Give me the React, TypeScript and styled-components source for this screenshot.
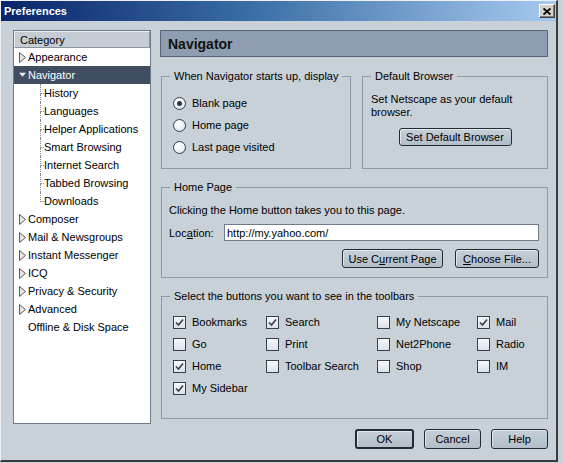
import React from "react";
import styled, { createGlobalStyle, css } from "styled-components";

const FONT = `"Liberation Sans", Arial, sans-serif`;

const GlobalStyle = createGlobalStyle`
  html, body { margin: 0; padding: 0; background: #c8d0d8; }
  body { font-family: ${FONT}; font-size: 11px; color: #000; }
  * { box-sizing: border-box; }
`;

const Window = styled.div`
  width: 558px;
  height: 462px;
  display: flex;
  flex-direction: column;
  background: #c8d0d8;
  border-left: 1px solid #eef0f2;
  border-top: 1px solid #eef0f2;
  border-right: 2px solid #3c3c3c;
  border-bottom: 2px solid #3c3c3c;
`;

const TitleBar = styled.div`
  height: 20px;
  display: flex;
  align-items: center;
  padding: 0 1px 0 3px;
  background: linear-gradient(to right, #0a246a 0%, #3a6ea5 45%, #a6caf0 100%);
`;

const Title = styled.span`
  color: #fff;
  font-weight: bold;
  font-size: 11px;
`;

const CloseButton = styled.div`
  margin-left: auto;
  width: 16px;
  height: 14px;
  display: flex;
  align-items: center;
  justify-content: center;
  background: #d4d0c8;
  border: 1px solid;
  border-color: #ffffff #404040 #404040 #ffffff;
  box-shadow: inset -1px -1px 0 #808080;
`;

const Body = styled.div`
  flex: 1;
  display: flex;
  align-items: flex-start;
  gap: 9px;
  padding: 9px 8px 0 12px;
`;

const Sidebar = styled.div`
  width: 138px;
  height: 394px;
  flex: 0 0 138px;
  background: #fff;
  border: 1px solid #6e7a86;
`;

const TreeHeader = styled.div`
  height: 17px;
  display: flex;
  align-items: center;
  padding-left: 5px;
  background: #c5ccd3;
  border-top: 1px solid #eef1f4;
  border-left: 1px solid #eef1f4;
  border-bottom: 1px solid #8a949e;
  border-right: 1px solid #8a949e;
`;

const TreeRow = styled.div<{ $indent: number; $selected?: boolean }>`
  height: 18px;
  display: flex;
  align-items: stretch;
  padding-left: ${(p) => p.$indent}px;
  white-space: nowrap;
  ${(p) =>
    p.$selected &&
    css`
      background: #414e62;
      color: #fff;
    `}
`;

const Twisty = styled.span`
  width: 7px;
  margin-right: 2px;
  display: flex;
  align-items: center;
  justify-content: center;
`;

const RowLabel = styled.span`
  display: flex;
  align-items: center;
`;

const Connector = styled.span`
  width: 4px;
  display: flex;
  flex-direction: column;
`;

const ConnTop = styled.span`
  flex: 1;
  border-left: 1px dotted #8a8a8a;
  border-bottom: 1px dotted #8a8a8a;
`;

const ConnBottom = styled.span<{ $last?: boolean }>`
  flex: 1;
  border-left: 1px dotted ${(p) => (p.$last ? "transparent" : "#8a8a8a")};
`;

const Main = styled.div`
  width: 388px;
  flex: 0 0 388px;
  display: flex;
  flex-direction: column;
`;

const PanelHeader = styled.div`
  height: 27px;
  display: flex;
  align-items: center;
  padding-left: 7px;
  background: #8e9eb0;
  border: 1px solid #56657a;
  font-weight: bold;
  font-size: 14px;
  color: #111;
`;

const Group = styled.fieldset<{ $top?: number }>`
  margin: ${(p) => p.$top ?? 0}px 0 0 1px;
  padding: 0;
  border: 1px solid #8f9aa6;
  min-width: 0;
`;

const Legend = styled.legend`
  margin-left: 8px;
  padding: 0 4px;
  line-height: 13px;
  font-size: 11px;
`;

const TopRow = styled.div`
  display: flex;
  gap: 11px;
  margin-top: 13px;
  & > fieldset {
    margin-top: 0;
  }
`;

const StartGroup = styled(Group)`
  flex: 0 0 190px;
`;

const BrowserGroup = styled(Group)`
  flex: 1;
  margin-left: 0;
`;

const RadioList = styled.div`
  padding: 9px 0 10px 11px;
`;

const OptionRow = styled.label`
  height: 22px;
  display: flex;
  align-items: center;
  gap: 6px;
  white-space: nowrap;
`;

const RadioCircle = styled.span`
  width: 13px;
  height: 13px;
  border-radius: 50%;
  border: 1px solid #36414e;
  background: radial-gradient(circle at 40% 35%, #ffffff 0%, #eef1f4 50%, #cfd6dd 100%);
  display: flex;
  align-items: center;
  justify-content: center;
  flex: 0 0 13px;
`;

const RadioDot = styled.span`
  width: 5px;
  height: 5px;
  border-radius: 50%;
  background: #2c3642;
`;

const CheckBox = styled.span`
  width: 13px;
  height: 13px;
  flex: 0 0 13px;
  border: 1px solid #36414e;
  background: linear-gradient(#f6f8fa, #dde2e8);
  display: flex;
  align-items: center;
  justify-content: center;
`;

const BrowserContent = styled.div`
  padding: 10px 8px 0 8px;
  display: flex;
  flex-direction: column;
`;

const Para = styled.div`
  line-height: 13px;
`;

const Button = styled.button<{ $w: number; $h?: number; $default?: boolean }>`
  width: ${(p) => p.$w}px;
  height: ${(p) => p.$h ?? 18}px;
  padding: 0;
  font-family: ${FONT};
  font-size: 11px;
  color: #000;
  background: linear-gradient(#c6cfd8, #b3bec9);
  border: ${(p) => (p.$default ? 2 : 1)}px solid #222a32;
  border-radius: 3px;
  box-shadow: inset 1px 1px 0 #e2e7ec;
  display: flex;
  align-items: center;
  justify-content: center;
`;

const CenteredButton = styled(Button)`
  margin: 9px auto 0;
`;

const HomeContent = styled.div`
  padding: 10px 8px 9px 7px;
`;

const LocationRow = styled.div`
  margin-top: 7px;
  display: flex;
  align-items: center;
`;

const FieldLabel = styled.span`
  width: 55px;
  flex: 0 0 55px;
`;

const TextInput = styled.div`
  flex: 1;
  height: 17px;
  background: #fff;
  border: 1px solid #6f7b88;
  display: flex;
  align-items: center;
  padding-left: 2px;
`;

const ButtonRow = styled.div<{ $gap: number; $top: number }>`
  margin-top: ${(p) => p.$top}px;
  display: flex;
  justify-content: flex-end;
  gap: ${(p) => p.$gap}px;
`;

const CheckGrid = styled.div`
  padding: 8px 0 19px 11px;
  display: grid;
  grid-template-columns: 93px 111px 100px 1fr;
  grid-auto-rows: 22px;
`;

const U = styled.span`
  text-decoration: underline;
`;

const RightArrow = () => (
  <svg width="7" height="11" viewBox="0 0 7 11">
    <polygon points="0.5,0.5 6.5,5.5 0.5,10.5" fill="#e6e6e6" stroke="#5a5a5a" strokeWidth="1" />
  </svg>
);

const DownArrow = () => (
  <svg width="8" height="6" viewBox="0 0 8 6">
    <polygon points="0,0.5 8,0.5 4,5" fill="#eef1f4" />
  </svg>
);

const CheckMark = () => (
  <svg width="9" height="9" viewBox="0 0 9 9">
    <path d="M1 4.5 L3.5 7 L8 1.5" fill="none" stroke="#3a4450" strokeWidth="1.7" />
  </svg>
);

type TopItem = { label: string; arrow: "right" | "down" | "none"; selected?: boolean };

const before: TopItem[] = [
  { label: "Appearance", arrow: "right" },
  { label: "Navigator", arrow: "down", selected: true },
];
const children = [
  "History",
  "Languages",
  "Helper Applications",
  "Smart Browsing",
  "Internet Search",
  "Tabbed Browsing",
  "Downloads",
];
const after: TopItem[] = [
  { label: "Composer", arrow: "right" },
  { label: "Mail & Newsgroups", arrow: "right" },
  { label: "Instant Messenger", arrow: "right" },
  { label: "ICQ", arrow: "right" },
  { label: "Privacy & Security", arrow: "right" },
  { label: "Advanced", arrow: "right" },
  { label: "Offline & Disk Space", arrow: "none" },
];

const TopRowItem = ({ item }: { item: TopItem }) => (
  <TreeRow $indent={5} $selected={item.selected}>
    <Twisty>
      {item.arrow === "right" && <RightArrow />}
      {item.arrow === "down" && <DownArrow />}
    </Twisty>
    <RowLabel>{item.label}</RowLabel>
  </TreeRow>
);

const checks: { label: string; checked: boolean }[] = [
  { label: "Bookmarks", checked: true },
  { label: "Search", checked: true },
  { label: "My Netscape", checked: false },
  { label: "Mail", checked: true },
  { label: "Go", checked: false },
  { label: "Print", checked: false },
  { label: "Net2Phone", checked: false },
  { label: "Radio", checked: false },
  { label: "Home", checked: true },
  { label: "Toolbar Search", checked: false },
  { label: "Shop", checked: false },
  { label: "IM", checked: false },
  { label: "My Sidebar", checked: true },
];

const radios = [
  { label: "Blank page", on: true },
  { label: "Home page", on: false },
  { label: "Last page visited", on: false },
];

export default function App() {
  return (
    <>
      <GlobalStyle />
      <Window>
        <TitleBar>
          <Title>Preferences</Title>
          <CloseButton>
            <svg width="8" height="7" viewBox="0 0 8 7">
              <path d="M0.5 0.5 L7.5 6.5 M7.5 0.5 L0.5 6.5" stroke="#000" strokeWidth="1.8" />
            </svg>
          </CloseButton>
        </TitleBar>
        <Body>
          <Sidebar>
            <TreeHeader>Category</TreeHeader>
            {before.map((it) => (
              <TopRowItem key={it.label} item={it} />
            ))}
            {children.map((c, i) => (
              <TreeRow key={c} $indent={26}>
                <Connector>
                  <ConnTop />
                  <ConnBottom $last={i === children.length - 1} />
                </Connector>
                <RowLabel>{c}</RowLabel>
              </TreeRow>
            ))}
            {after.map((it) => (
              <TopRowItem key={it.label} item={it} />
            ))}
          </Sidebar>
          <Main>
            <PanelHeader>Navigator</PanelHeader>
            <TopRow>
              <StartGroup>
                <Legend>When Navigator starts up, display</Legend>
                <RadioList>
                  {radios.map((r) => (
                    <OptionRow key={r.label}>
                      <RadioCircle>{r.on && <RadioDot />}</RadioCircle>
                      {r.label}
                    </OptionRow>
                  ))}
                </RadioList>
              </StartGroup>
              <BrowserGroup>
                <Legend>Default Browser</Legend>
                <BrowserContent>
                  <Para>Set Netscape as your default browser.</Para>
                  <CenteredButton $w={113}>Set Default Browser</CenteredButton>
                </BrowserContent>
              </BrowserGroup>
            </TopRow>
            <Group $top={12}>
              <Legend>Home Page</Legend>
              <HomeContent>
                <Para>Clicking the Home button takes you to this page.</Para>
                <LocationRow>
                  <FieldLabel>
                    Loc<U>a</U>tion:
                  </FieldLabel>
                  <TextInput>http://my.yahoo.com/</TextInput>
                </LocationRow>
                <ButtonRow $gap={12} $top={8}>
                  <Button $w={101} $h={19}>
                    Use C<U>u</U>rrent Page
                  </Button>
                  <Button $w={84} $h={19}>
                    <U>C</U>hoose File...
                  </Button>
                </ButtonRow>
              </HomeContent>
            </Group>
            <Group $top={12}>
              <Legend>Select the buttons you want to see in the toolbars</Legend>
              <CheckGrid>
                {checks.map((c) => (
                  <OptionRow key={c.label}>
                    <CheckBox>{c.checked && <CheckMark />}</CheckBox>
                    {c.label}
                  </OptionRow>
                ))}
              </CheckGrid>
            </Group>
            <ButtonRow $gap={10} $top={10}>
              <Button $w={59} $h={20} $default>
                OK
              </Button>
              <Button $w={57} $h={20}>
                Cancel
              </Button>
              <Button $w={57} $h={20}>
                Help
              </Button>
            </ButtonRow>
          </Main>
        </Body>
      </Window>
    </>
  );
}
